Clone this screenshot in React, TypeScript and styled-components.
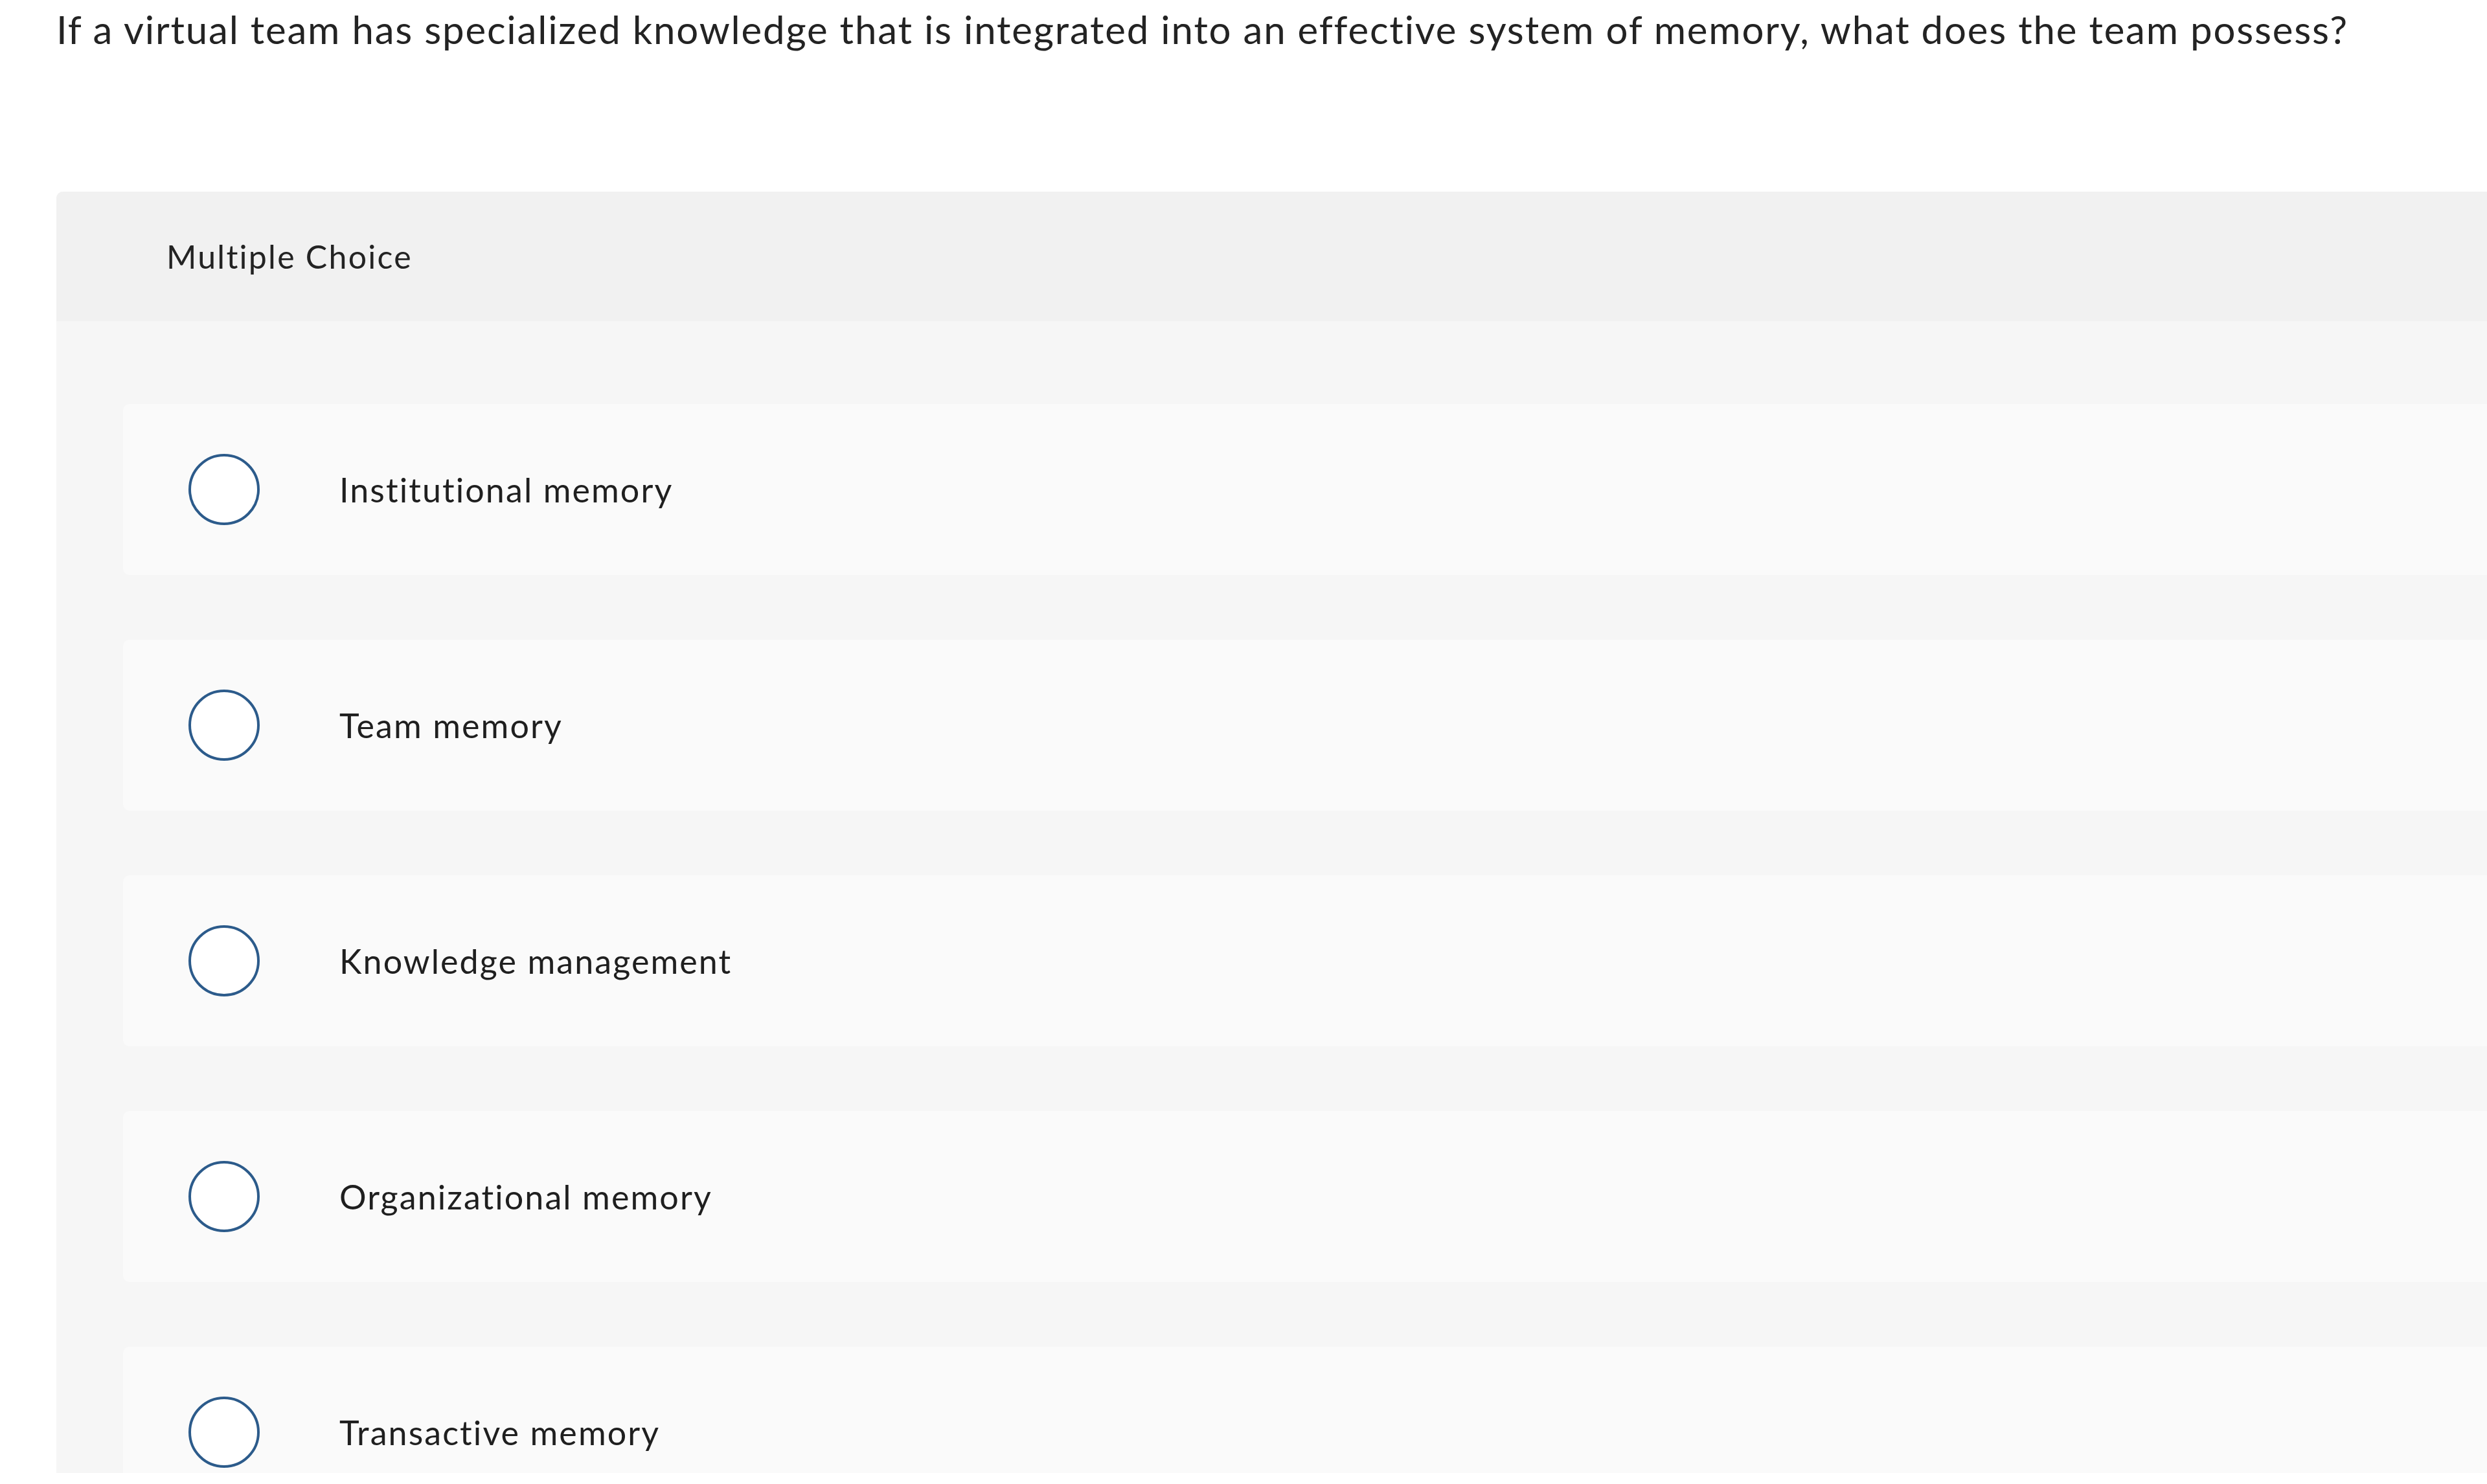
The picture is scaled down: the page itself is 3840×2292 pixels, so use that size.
import React from "react";
import styled, { createGlobalStyle } from "styled-components";

const GlobalStyle = createGlobalStyle`
  html, body {
    margin: 0;
    padding: 0;
    background: #ffffff;
    overflow: hidden;
  }
  body {
    font-family: "Lato", "Liberation Sans", sans-serif;
    color: #232323;
  }
`;

const Page = styled.div`
  width: 3840px;
  height: 2292px;
  padding: 9px 0 0 87px;
  box-sizing: border-box;
  overflow: hidden;
`;

const Question = styled.p`
  margin: 0;
  font-size: 60px;
  line-height: 1.2;
  letter-spacing: 0.03em;
  color: #232323;
  white-space: nowrap;
`;

const Panel = styled.section`
  margin-top: 215px;
  width: 3900px;
  height: 1979px;
  background: #f6f6f6;
  border-radius: 10px 0 0 0;
  overflow: hidden;
`;

const PanelHeader = styled.header`
  height: 200px;
  background: #f1f1f1;
  display: flex;
  align-items: center;
  padding-left: 170px;
  font-size: 50px;
  line-height: 1.2;
  letter-spacing: 0.045em;
  color: #232323;
`;

const Choices = styled.div`
  display: flex;
  flex-direction: column;
  gap: 100px;
  padding: 128px 0 0 103px;
`;

const Choice = styled.label`
  display: flex;
  align-items: center;
  height: 264px;
  flex-shrink: 0;
  background: #fafafa;
  border-radius: 10px 0 0 10px;
  padding-left: 101px;
  cursor: pointer;
`;

const Radio = styled.span`
  width: 110px;
  height: 110px;
  box-sizing: border-box;
  border: 4px solid #2c5b8b;
  border-radius: 50%;
  background: #ffffff;
  flex-shrink: 0;
`;

const ChoiceText = styled.span`
  margin-left: 123px;
  font-size: 52px;
  line-height: 1.2;
  letter-spacing: 0.04em;
  color: #1f1f1f;
`;

const options = [
  "Institutional memory",
  "Team memory",
  "Knowledge management",
  "Organizational memory",
  "Transactive memory",
];

export default function App() {
  return (
    <>
      <GlobalStyle />
      <Page>
        <Question>
          If a virtual team has specialized knowledge that is integrated into an
          effective system of memory, what does the team possess?
        </Question>
        <Panel>
          <PanelHeader>Multiple Choice</PanelHeader>
          <Choices>
            {options.map((o) => (
              <Choice key={o}>
                <Radio />
                <ChoiceText>{o}</ChoiceText>
              </Choice>
            ))}
          </Choices>
        </Panel>
      </Page>
    </>
  );
}
